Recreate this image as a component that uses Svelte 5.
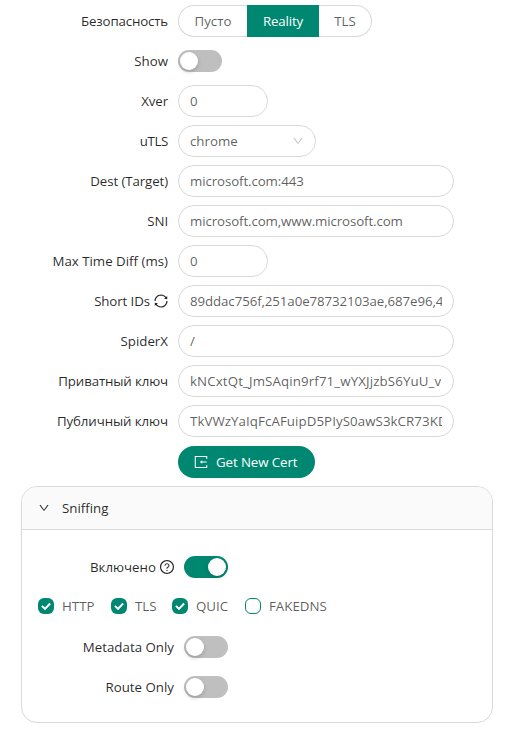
<script>
  const rows = [
    { label: 'Xver', value: '0', width: 90 },
    { label: 'uTLS', value: 'chrome', width: 138, select: true, ls: -0.35 },
    { label: 'Dest (Target)', value: 'microsoft.com:443', width: 276, vs: -0.11 },
    { label: 'SNI', value: 'microsoft.com,www.microsoft.com', width: 276, vs: -0.11 },
    { label: 'Max Time Diff (ms)', value: '0', width: 90, ls: 0 },
    { label: 'Short IDs', value: '89ddac756f,251a0e78732103ae,687e96,4', width: 276, sync: true, vs: -0.1 },
    { label: 'SpiderX', value: '/', width: 276, ls: 0 },
    { label: 'Приватный ключ', value: 'kNCxtQt_JmSAqin9rf71_wYXJjzbS6YuU_v', width: 276, vs: 0.12, ls: -0.14 },
    { label: 'Публичный ключ', value: 'TkVWzYaIqFcAFuipD5PIyS0awS3kCR73KD', width: 276, vs: 0.07 }
  ];
  const protocols = [
    { name: 'HTTP', checked: true, width: 73 },
    { name: 'TLS', checked: true, width: 61 },
    { name: 'QUIC', checked: true, width: 73 },
    { name: 'FAKEDNS', checked: false, width: 90 }
  ];
  const down =
    'M884 256h-75c-5.1 0-9.9 2.5-12.9 6.6L512 654.2 227.9 262.6c-3-4.1-7.8-6.6-12.9-6.6h-75c-6.5 0-10.3 7.4-6.5 12.7l352.6 486.1c12.8 17.6 39 17.6 51.7 0l352.6-486.1c3.9-5.3.1-12.7-6.4-12.7z';
  const sync =
    'M168 504.2c1-43.7 10-86.1 26.9-126 17.3-41 42.1-77.7 73.7-109.4S337 212.3 378 195c42.4-17.9 87.4-27 133.9-27s91.5 9.1 133.8 27A341.5 341.5 0 0 1 755 268.8c9.9 9.9 19.2 20.4 27.8 31.4l-60.2 47a8 8 0 0 0 3 14.1l175.7 43c5 1.2 9.9-2.6 9.9-7.7l.8-180.9c0-6.7-7.7-10.5-12.9-6.3l-56.4 44.1C765.8 155.1 646.2 92 511.8 92 282.7 92 96.3 275.6 92 503.8a8 8 0 0 0 8 8.2h60c4.4 0 7.9-3.5 8-7.8zm756 7.8h-60c-4.4 0-7.9 3.5-8 7.8-1 43.7-10 86.1-26.9 126-17.3 41-42.1 77.8-73.7 109.4A342.45 342.45 0 0 1 512.1 856a342.24 342.24 0 0 1-243.2-100.8c-9.9-9.9-19.2-20.4-27.8-31.4l60.2-47a8 8 0 0 0-3-14.1l-175.7-43c-5-1.2-9.9 2.6-9.9 7.7l-.7 181c0 6.7 7.7 10.5 12.9 6.3l56.4-44.1C258.2 868.9 377.8 932 512.2 932c229.2 0 415.5-183.7 419.8-411.8a8 8 0 0 0-8-8.2z';
  const question =
    'M512 64C264.6 64 64 264.6 64 512s200.6 448 448 448 448-200.6 448-448S759.4 64 512 64zm0 820c-205.4 0-372-166.6-372-372s166.6-372 372-372 372 166.6 372 372-166.6 372-372 372zM623.6 316.7C593.6 290.4 554 276 512 276s-81.6 14.5-111.6 40.7C369.2 344 352 380.7 352 420v7.6c0 4.4 3.6 8 8 8h48c4.4 0 8-3.6 8-8V420c0-44.1 43.1-80 96-80s96 35.9 96 80c0 31.1-22 59.6-56.1 72.7-21.2 8.1-39.2 22.3-52.1 40.9-13.1 19-19.9 41.8-19.9 64.9V620c0 4.4 3.6 8 8 8h48c4.4 0 8-3.6 8-8v-22.7a48.3 48.3 0 0 1 30.9-44.8c59-22.7 97.1-74.7 97.1-132.5.1-39.3-17.1-76-48.3-103.3zM472 732a40 40 0 1 0 80 0 40 40 0 1 0-80 0z';
</script>

{#snippet icon(d, size)}
  <svg class="icon" viewBox="0 0 1024 1024" width={size} height={size}><path {d} fill="currentColor" /></svg>
{/snippet}

{#snippet toggle(on)}
  <span class="switch" class:on role="switch" aria-checked={on}><i></i></span>
{/snippet}

<main>
  <div class="row">
    <div class="label"><span style:letter-spacing="-0.16px">Безопасность</span></div>
    <div class="radios">
      <span class="radio first">Пусто</span>
      <span class="radio active">Reality</span>
      <span class="radio last">TLS</span>
    </div>
  </div>
  <div class="row">
    <div class="label"><span>Show</span></div>
    {@render toggle(false)}
  </div>
  {#each rows as r}
    <div class="row">
      <div class="label">
        <span style:letter-spacing="{r.ls ?? -0.1}px">{r.label}</span>
        {#if r.sync}{@render icon(sync, 16)}{/if}
      </div>
      <div class="input" style:width="{r.width}px">
        <span class="value" style:letter-spacing="{r.vs ?? 0}px">{r.value}</span>
        {#if r.select}<span class="arrow">{@render icon(down, 12)}</span>{/if}
      </div>
    </div>
  {/each}
  <div class="row">
    <div class="label"></div>
    <div class="button">
      <svg viewBox="0 0 1024 1024" width="14" height="14">
        <path
          d="M932 300V110H92v804h840V724M932 512H560"
          fill="none"
          stroke="currentColor"
          stroke-width="74"
        />
        <path d="M600 390v244L425 512z" fill="currentColor" />
      </svg>
      <span>Get New Cert</span>
    </div>
  </div>

  <section class="panel">
    <header>
      {@render icon(down, 12)}
      <span>Sniffing</span>
    </header>
    <div class="body">
      <div class="row">
        <div class="label">
          <span>Включено</span>
          {@render icon(question, 16)}
        </div>
        {@render toggle(true)}
      </div>
      <div class="checks">
        {#each protocols as p}
          <div class="check" style:width="{p.width}px">
            <span class="box" class:checked={p.checked}>
              {#if p.checked}
                <svg viewBox="0 0 16 16" width="16" height="16"><path d="M3.9 7.9 7 10.9 12.1 5.5" /></svg>
              {/if}
            </span>
            <span class="name">{p.name}</span>
          </div>
        {/each}
      </div>
      <div class="row">
        <div class="label"><span>Metadata Only</span></div>
        {@render toggle(false)}
      </div>
      <div class="row">
        <div class="label"><span>Route Only</span></div>
        {@render toggle(false)}
      </div>
    </div>
  </section>
</main>

<style>
  :global(body) {
    margin: 0;
    background: #fff;
  }
  main {
    box-sizing: border-box;
    width: 513px;
    height: 740px;
    padding-top: 5px;
    overflow: hidden;
    font: 13.3px/20px 'Open Sans', 'Noto Sans', sans-serif;
    color: rgba(0, 0, 0, 0.65);
  }
  svg {
    display: block;
    flex: none;
  }
  .row {
    display: flex;
    align-items: center;
    height: 32px;
    margin-bottom: 8px;
  }
  .label {
    display: flex;
    flex: none;
    align-items: center;
    justify-content: flex-end;
    gap: 3px;
    width: 168px;
    margin-right: 10px;
    color: rgba(0, 0, 0, 0.85);
    white-space: nowrap;
  }
  .label .icon {
    margin-right: -1px;
  }
  .radios {
    display: flex;
    height: 32px;
  }
  .radio {
    box-sizing: border-box;
    height: 32px;
    border: 1px solid #d9d9d9;
    line-height: 30px;
    text-align: center;
  }
  .first {
    width: 69px;
    border-right: 0;
    border-radius: 16px 0 0 16px;
  }
  .active {
    width: 72px;
    border-color: #008771;
    background: #008771;
    color: #fff;
    font-weight: 500;
    letter-spacing: -0.15px;
  }
  .last {
    width: 53px;
    border-left: 0;
    border-radius: 0 16px 16px 0;
  }
  .switch {
    box-sizing: border-box;
    display: flex;
    width: 44px;
    height: 22px;
    padding: 2px;
    border-radius: 11px;
    background: #bfbfbf;
  }
  .switch i {
    width: 18px;
    height: 18px;
    border-radius: 50%;
    background: #fff;
    box-shadow: 0 2px 4px rgba(0, 35, 11, 0.2);
  }
  .switch.on {
    justify-content: flex-end;
    background: #008771;
  }
  .input {
    box-sizing: border-box;
    display: flex;
    align-items: center;
    justify-content: space-between;
    height: 32px;
    padding: 0 11px;
    border: 1px solid #d9d9d9;
    border-radius: 16px;
  }
  .value {
    overflow: hidden;
    white-space: nowrap;
  }
  .arrow {
    color: rgba(0, 0, 0, 0.25);
  }
  .button {
    box-sizing: border-box;
    display: flex;
    align-items: center;
    gap: 8px;
    width: 137px;
    height: 32px;
    margin-top: 1px;
    padding-left: 16px;
    border-radius: 16px;
    background: #008771;
    color: #fff;
    font-weight: 500;
    letter-spacing: -0.1px;
    white-space: nowrap;
  }
  .panel {
    box-sizing: border-box;
    width: 472px;
    height: 237px;
    margin: 9px 0 0 21px;
    overflow: hidden;
    border: 1px solid #d9d9d9;
    border-radius: 16px;
  }
  header {
    box-sizing: border-box;
    display: flex;
    align-items: center;
    gap: 12px;
    height: 43px;
    padding-left: 16px;
    border-bottom: 1px solid #d9d9d9;
    background: #fafafa;
    color: rgba(0, 0, 0, 0.85);
  }
  .body {
    padding: 21px 16px 0;
  }
  .body .label {
    width: 136px;
  }
  .checks {
    box-sizing: border-box;
    display: flex;
    align-items: center;
    height: 32px;
    margin-bottom: 8px;
    padding-bottom: 2px;
  }
  .check {
    display: flex;
    align-items: center;
    gap: 8px;
  }
  .box {
    box-sizing: border-box;
    flex: none;
    width: 16px;
    height: 16px;
    border: 1px solid #008771;
    border-radius: 6px;
  }
  .checked {
    border: 0;
    background: #008771;
  }
  .box path {
    fill: none;
    stroke: #fff;
    stroke-width: 2;
  }
</style>
